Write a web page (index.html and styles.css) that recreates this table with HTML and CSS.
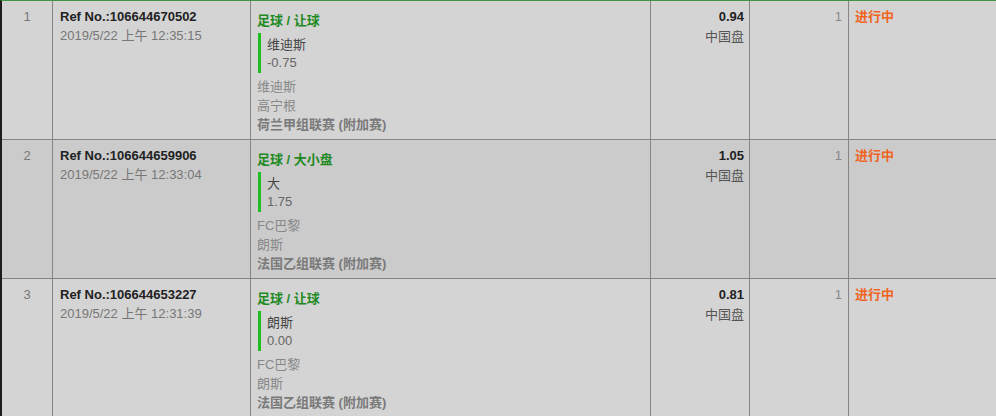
FILE: index.html
```html
<!DOCTYPE html>
<html>
<head>
<meta charset="utf-8">
<link rel="stylesheet" href="styles.css">
</head>
<body>
<div class="list">
  <div class="row">
    <div class="cell idx">1</div>
    <div class="cell ref"><div class="refno">Ref No.:106644670502</div><div class="date">2019/5/22 上午 12:35:15</div></div>
    <div class="cell bet">
      <div class="title">足球 / 让球</div>
      <div class="pick"><div class="sel">维迪斯</div><div class="hdp">-0.75</div></div>
      <div class="team">维迪斯</div>
      <div class="team">高宁根</div>
      <div class="league">荷兰甲组联赛 (附加赛)</div>
    </div>
    <div class="cell odds"><div class="odd">0.94</div><div class="type">中国盘</div></div>
    <div class="cell stake">1</div>
    <div class="cell status">进行中</div>
  </div>
  <div class="row alt">
    <div class="cell idx">2</div>
    <div class="cell ref"><div class="refno">Ref No.:106644659906</div><div class="date">2019/5/22 上午 12:33:04</div></div>
    <div class="cell bet">
      <div class="title">足球 / 大小盘</div>
      <div class="pick"><div class="sel">大</div><div class="hdp">1.75</div></div>
      <div class="team">FC巴黎</div>
      <div class="team">朗斯</div>
      <div class="league">法国乙组联赛 (附加赛)</div>
    </div>
    <div class="cell odds"><div class="odd">1.05</div><div class="type">中国盘</div></div>
    <div class="cell stake">1</div>
    <div class="cell status">进行中</div>
  </div>
  <div class="row">
    <div class="cell idx">3</div>
    <div class="cell ref"><div class="refno">Ref No.:106644653227</div><div class="date">2019/5/22 上午 12:31:39</div></div>
    <div class="cell bet">
      <div class="title">足球 / 让球</div>
      <div class="pick"><div class="sel">朗斯</div><div class="hdp">0.00</div></div>
      <div class="team">FC巴黎</div>
      <div class="team">朗斯</div>
      <div class="league">法国乙组联赛 (附加赛)</div>
    </div>
    <div class="cell odds"><div class="odd">0.81</div><div class="type">中国盘</div></div>
    <div class="cell stake">1</div>
    <div class="cell status">进行中</div>
  </div>
</div>
</body>
</html>
```
FILE: styles.css
```css
html, body { margin: 0; padding: 0; background: #d4d4d4; }
body {
  font-family: "Liberation Sans", Arial, "Noto Sans CJK SC", sans-serif;
  font-size: 13px;
  line-height: 19px;
  color: #333;
}
.list {
  width: 996px;
  border-top: 1px solid #3c973c;
  border-left: 2px solid #1e1e1e;
  box-sizing: border-box;
}
.row {
  display: grid;
  grid-template-columns: 51px 198px 400px 99px 99px 1fr;
  background: #d4d4d4;
}
.row.alt { background: #cbcbcb; }
.cell {
  box-sizing: border-box;
  height: 139px;
  border-right: 1px solid #858585;
  border-bottom: 1px solid #858585;
  padding: 6px 6px 4px 7px;
}
.cell.status { border-right: none; }
.idx { text-align: center; color: #777; padding-left: 6px; }
.refno { font-weight: bold; color: #222; }
.date { color: #777; }
.bet { padding-left: 6px; }
.title { font-weight: bold; color: #1f8a1f; margin-top: 4px; }
.pick {
  margin: 3px 0 4px 1px;
  border-left: 3px solid #1fbf1f;
  padding: 3px 0 1px 6px;
  line-height: 18px;
}
.sel { color: #444; }
.hdp { color: #666; }
.team { color: #888; }
.league { font-weight: bold; color: #7a7a7a; }
.odds { text-align: right; padding-right: 5px; }
.odd { font-weight: bold; color: #222; }
.type { color: #555; margin-top: 1px; }
.stake { text-align: right; color: #888; padding-right: 6px; }
.status { color: #f0641e; font-weight: bold; padding-left: 6px; }
```
